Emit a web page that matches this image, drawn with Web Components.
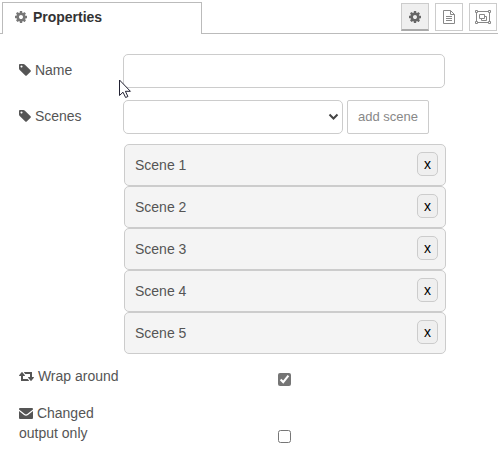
<!DOCTYPE html>
<html lang="en">
<head>
<meta charset="utf-8">
<title>Properties</title>
<style>
body { margin: 0; background: #fff; color: #555; font: 14px/20px "Liberation Sans", Arial, sans-serif; }
</style>
</head>
<body>
<property-editor></property-editor>
<script>
const ICONS = {
  cog: ['0 0 1536 1792', 12, '<path transform="translate(-128)" d="M1152 896q0-106-75-181t-181-75-181 75-75 181 75 181 181 75 181-75 75-181zm512-109v222q0 12-8 23t-20 13l-185 28q-19 54-39 91 35 50 107 138 10 12 10 25t-9 23q-27 37-99 108t-94 71q-12 0-26-9l-138-108q-44 23-91 38-16 136-29 186-7 28-36 28h-222q-14 0-24.5-8.5t-11.5-21.5l-28-184q-49-16-90-37l-141 107q-10 9-25 9-14 0-25-11-126-114-165-168-7-10-7-23 0-12 8-23 15-21 51-66.5t54-70.5q-27-50-41-99l-183-27q-13-2-21-12.5t-8-23.5v-222q0-12 8-23t19-13l186-28q14-46 39-92-40-57-107-138-10-12-10-24 0-10 9-23 26-36 98.5-107.5t94.5-71.5q13 0 26 10l138 107q44-23 91-38 16-136 29-186 7-28 36-28h222q14 0 24.5 8.5t11.5 21.5l28 184q49 16 90 37l142-107q9-9 24-9 13 0 25 10 129 119 165 170 7 8 7 22 0 12-8 23-15 21-51 66.5t-54 70.5q26 50 41 98l183 28q13 2 21 12.5t8 23.5z"/>'],
  tag: ['128 0 1536 1792', 12, '<path d="M576 448q0-53-37.5-90.5t-90.5-37.5-90.5 37.5-37.5 90.5 37.5 90.5 90.5 37.5 90.5-37.5 37.5-90.5zm1067 576q0 53-37 90l-491 492q-39 37-91 37-53 0-90-37l-715-716q-38-37-64.5-101t-26.5-117v-416q0-52 38-90t90-38h416q53 0 117 26.5t102 64.5l715 714q37 39 37 91z"/>'],
  retweet: ['0 0 1920 1792', 15, '<path d="M1280 1504q0 13-9.5 22.5t-22.5 9.5h-960q-8 0-13.5-2t-9-7-5.5-8-3-11.5-1-11.5v-600h-192q-26 0-45-19t-19-45q0-24 15-41l320-384q19-22 49-22t49 22l320 384q15 17 15 41 0 26-19 45t-45 19h-192v384h576q16 0 25 11l160 192q7 10 7 21zm640-416q0 24-15 41l-320 384q-20 23-49 23t-49-23l-320-384q-15-17-15-41 0-26 19-45t45-19h192v-384h-576q-16 0-25-12l-160-192q-7-9-7-20 0-13 9.5-22.5t22.5-9.5h960q8 0 13.5 2t9 7 5.5 8 3 11.5 1 11.5v600h192q26 0 45 19t19 45z"/>'],
  envelope: ['0 0 14 14', 14, '<path d="M0 3q0-1 1-1h12q1 0 1 1v.6L8.2 8Q7 8.900 5.800 8L0 3.600zM0 5l5 4q2 1.500 4 0l5-4v7q0 1-1 1H1q-1 0-1-1z"/>'],
  file: ['0 0 12 14', 12, '<g fill="none" stroke="currentColor"><path d="M.5.500h7l4 4v9H.500zM7.500.500v4h4"/><path d="M3 6.500h6M3 8.500h6M3 10.500h6"/></g>'],
  group: ['0 0 16 14', 16, '<g fill="none" stroke="currentColor"><path d="M1.500 1.500h13v11h-13z"/><path d="M4.500 4.500h5v4h-5zM9.500 6.500h2v4h-5v-2"/></g><g fill="#fff" stroke="currentColor"><path d="M.5.500h2v2h-2zM13.500.500h2v2h-2zM.500 11.500h2v2h-2zM13.500 11.500h2v2h-2z"/></g>']
};

const define = (name, html) => customElements.define(name, class extends HTMLElement {
  constructor() {
    super();
    this.attachShadow({ mode: 'open' });
  }
  connectedCallback() {
    if (this.shadowRoot.firstChild) return;
    const template = document.createElement('template');
    template.innerHTML = typeof html === 'function' ? html(this) : html;
    this.shadowRoot.append(template.content.cloneNode(true));
  }
});

define('ed-icon', el => {
  const [box, width, body] = ICONS[el.getAttribute('name')];
  return `<style>
    :host { display: inline-block; line-height: 0; vertical-align: -2px; }
    svg { display: block; fill: currentColor; }
  </style>
  <svg viewBox="${box}" width="${width}" height="14" aria-hidden="true">${body}</svg>`;
});

define('tab-bar', `<style>
    :host { display: flex; justify-content: space-between; padding: 2px 1px 0 2px; box-shadow: inset 0 -1px #bbb; color: #888; }
    .tab { flex: 0 1 200px; box-sizing: border-box; height: 32px; padding: 0 12px 3px; border: 1px solid #bbb; border-bottom: 0;
      background: #fff; color: #333; font: bold 14px/20px "Liberation Sans", Arial, sans-serif; text-align: left; }
    .tab ed-icon { color: #777; margin-right: 2px; }
    nav { display: flex; gap: 6px; padding-top: 1px; }
    nav button { display: flex; align-items: center; justify-content: center; box-sizing: border-box; width: 28px; height: 28px;
      padding: 0; border: 1px solid #ccc; background: #fff; color: #888; }
    nav .on { background: #efefef; color: #666; border-bottom: 2px solid #aaa; }
  </style>
  <button class="tab"><ed-icon name="cog"></ed-icon> Properties</button>
  <nav>
    <button class="on" aria-label="Properties"><ed-icon name="cog"></ed-icon></button>
    <button aria-label="Description"><ed-icon name="file"></ed-icon></button>
    <button aria-label="Appearance"><ed-icon name="group"></ed-icon></button>
  </nav>`);

const ROW = `
  :host { display: grid; grid-template-columns: 104px 70%; }
  input, select { box-sizing: border-box; margin: 0; font: inherit; color: inherit; }
  input[type=text], select { width: 100%; height: 34px; padding: 0 6px; border: 1px solid #ccc; border-radius: 5px; background: #fff; }
`;

define('text-row', el => `<style>${ROW}
    label { padding-top: 6px; }
  </style>
  <label for="field"><ed-icon name="tag"></ed-icon> ${el.getAttribute('label')}</label>
  <input id="field" type="text">`);

define('scene-picker', `<style>${ROW}
    label { padding-top: 6px; }
    .controls { display: flex; gap: 4px; }
    .pick { position: relative; flex: 0 0 220px; }
    select { appearance: none; }
    .pick svg { position: absolute; right: 4px; top: 13px; pointer-events: none; }
    button { box-sizing: border-box; height: 34px; padding: 0 10px; border: 1px solid #ccc; border-radius: 2px;
      background: #fff; color: #888; font: 13px/20px "Liberation Sans", Arial, sans-serif; white-space: nowrap; }
  </style>
  <label for="field"><ed-icon name="tag"></ed-icon> Scenes</label>
  <div class="controls">
    <div class="pick"><select id="field"></select>
      <svg width="11" height="8" viewBox="0 0 11 8" fill="none" stroke="#444" stroke-width="2"><path d="M1.500 1.500l4 4 4-4"/></svg></div>
    <button>add scene</button>
  </div>`);

define('scene-item', `<style>
    :host { display: flex; justify-content: space-between; align-items: flex-start; box-sizing: border-box; height: 42px;
      padding: 7px 7px 7px 10px; border: 1px solid #ccc; border-radius: 5px; background: #f4f4f4; }
    span { padding-top: 3px; }
    button { box-sizing: border-box; width: 21px; height: 24px; padding: 0; border: 1px solid #ccc; border-radius: 5px;
      background: #efefef; color: #000; font: 14px/20px "Liberation Sans", Arial, sans-serif; }
  </style>
  <span><slot></slot></span><button>x</button>`);

define('check-row', el => `<style>${ROW}
    :host { align-items: end; }
    input { width: 13px; height: 13px; justify-self: center; accent-color: #757575; }
  </style>
  <label for="field"><ed-icon name="${el.getAttribute('icon')}"></ed-icon> ${el.getAttribute('label')}</label>
  <input id="field" type="checkbox"${el.hasAttribute('checked') ? ' checked' : ''}>`);

define('mouse-pointer', `<style>
    :host { position: absolute; left: 119px; top: 79px; pointer-events: none; }
    svg { display: block; }
  </style>
  <svg width="13" height="20" viewBox="0 0 13 20"><path d="M.5 1v15.500l3.500-3.300 2.600 5.300 2.300-1-2.500-5.200h5z" fill="#fff" stroke="#223" stroke-linejoin="round"/></svg>`);

define('property-editor', `<style>
    :host { display: block; position: relative; }
    form { display: flex; flex-direction: column; gap: 12px; padding: 20px 19px 12px; }
    .list { margin: -2px 0 0 105px; width: 70%; }
    .checks { display: flex; flex-direction: column; gap: 17px; }
  </style>
  <tab-bar></tab-bar>
  <form>
    <text-row label="Name"></text-row>
    <scene-picker></scene-picker>
    <div class="list">
      <scene-item>Scene 1</scene-item>
      <scene-item>Scene 2</scene-item>
      <scene-item>Scene 3</scene-item>
      <scene-item>Scene 4</scene-item>
      <scene-item>Scene 5</scene-item>
    </div>
    <div class="checks">
      <check-row icon="retweet" label="Wrap around" checked></check-row>
      <check-row icon="envelope" label="Changed output only"></check-row>
    </div>
  </form>
  <mouse-pointer></mouse-pointer>`);
</script>
</body>
</html>
